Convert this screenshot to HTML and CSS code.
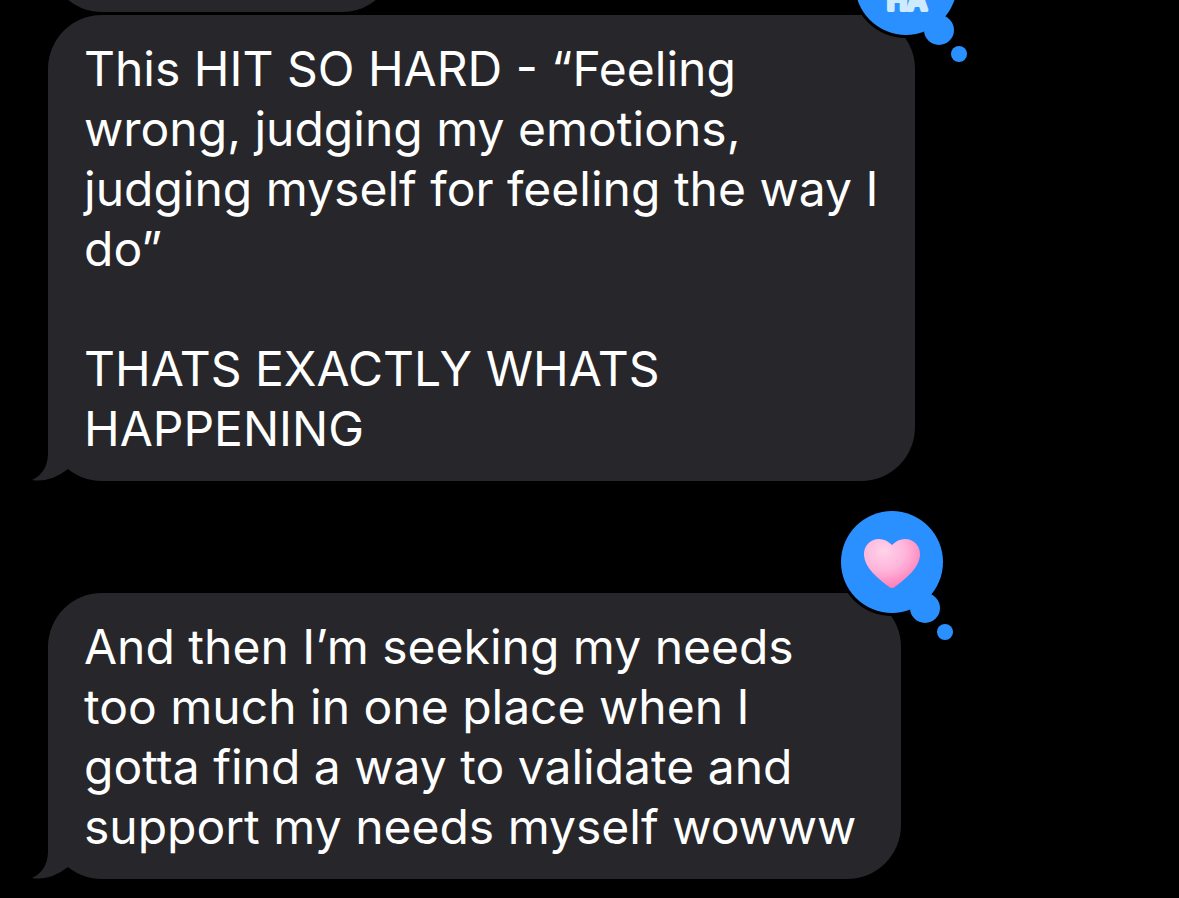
FILE: index.html
```
<!DOCTYPE html>
<html lang="en">
<head>
    <meta charset="UTF-8">
    <meta name="viewport" content="width=device-width, initial-scale=1.0">
    <title>Messages</title>
    <link rel="stylesheet" href="styles.css">
</head>
<body>
    <main class="thread">
        <div class="bubble previous"></div>

        <div class="bubble first">
            <p>This HIT SO HARD - “Feeling<br>wrong, judging my emotions,<br>judging myself for feeling the way I<br>do”</p>
            <p>THATS EXACTLY WHATS<br>HAPPENING</p>
            <svg class="tail" viewBox="0 0 40 56" aria-hidden="true">
                <path d="M16 0V30Q15 48 0 55Q18 58 36 44L40 0Z"/>
            </svg>
            <svg class="reaction" viewBox="0 0 132 136" role="img" aria-label="Ha ha">
                <circle class="outline" cx="54" cy="54" r="54"/>
                <circle cx="54" cy="54" r="51"/>
                <circle cx="87" cy="100" r="15"/>
                <circle cx="107" cy="124" r="8"/>
                <text class="haha" x="55" y="80">HA</text>
            </svg>
        </div>

        <div class="bubble second">
            <p>And then I’m seeking my needs<br>too much in one place when I<br>gotta find a way to validate and<br>support my needs myself wowww</p>
            <svg class="tail" viewBox="0 0 40 56" aria-hidden="true">
                <path d="M16 0V30Q15 48 0 55Q18 58 36 44L40 0Z"/>
            </svg>
            <svg class="reaction" viewBox="0 0 132 136" role="img" aria-label="Heart">
                <defs>
                    <radialGradient id="pink" cx="0.35" cy="0.25" r="0.8">
                        <stop offset="0" stop-color="#ffd3ea"/>
                        <stop offset="0.5" stop-color="#ffb4da"/>
                        <stop offset="1" stop-color="#ff78b4"/>
                    </radialGradient>
                </defs>
                <circle class="outline" cx="54" cy="54" r="54"/>
                <circle cx="54" cy="54" r="51"/>
                <circle cx="87" cy="100" r="15"/>
                <circle cx="107" cy="124" r="8"/>
                <path fill="url(#pink)" d="M54 37C50 33 46 31 41 31C32 31 26 38 26 46C26 60 41 71 50 78Q54 82 58 78C67 71 82 60 82 46C82 38 76 31 67 31C62 31 58 33 54 37Z"/>
            </svg>
        </div>
    </main>
</body>
</html>
```

FILE: styles.css
```
body {
    margin: 0;
    background-color: #000;
    color: #fff;
    font-family: Inter, "Liberation Sans", sans-serif;
    font-size: 48px;
    line-height: 60px;
}
.thread {
    display: flex;
    flex-direction: column;
    align-items: flex-start;
    padding-left: 48px;
    overflow: hidden;
}
.bubble {
    position: relative;
    box-sizing: border-box;
    padding: 24px 37px 22px 36px;
    border-radius: 54px;
    background-color: #27272b;
}
.bubble p {
    margin: 0;
}
.bubble p + p {
    margin-top: 60px;
}
/* only the bottom edge of the older message is scrolled into view */
.previous {
    width: 348px;
    height: 108px;
    margin-top: -96px;
}
.first {
    margin-top: 3px;
}
.second {
    margin-top: 112px;
    padding-right: 45px;
}
.tail {
    position: absolute;
    left: -16px;
    bottom: 0;
    width: 40px;
    height: 56px;
    fill: #27272b;
}
.reaction {
    position: absolute;
    top: -85px;
    right: -69px;
    width: 132px;
    height: 136px;
    fill: #2b90ff;
}
.outline {
    fill: #000;
}
.haha {
    fill: #cdeaff;
    stroke: #cdeaff;
    stroke-width: 4px;
    stroke-linejoin: round;
    font-size: 27px;
    font-weight: 600;
    text-anchor: middle;
}
```
